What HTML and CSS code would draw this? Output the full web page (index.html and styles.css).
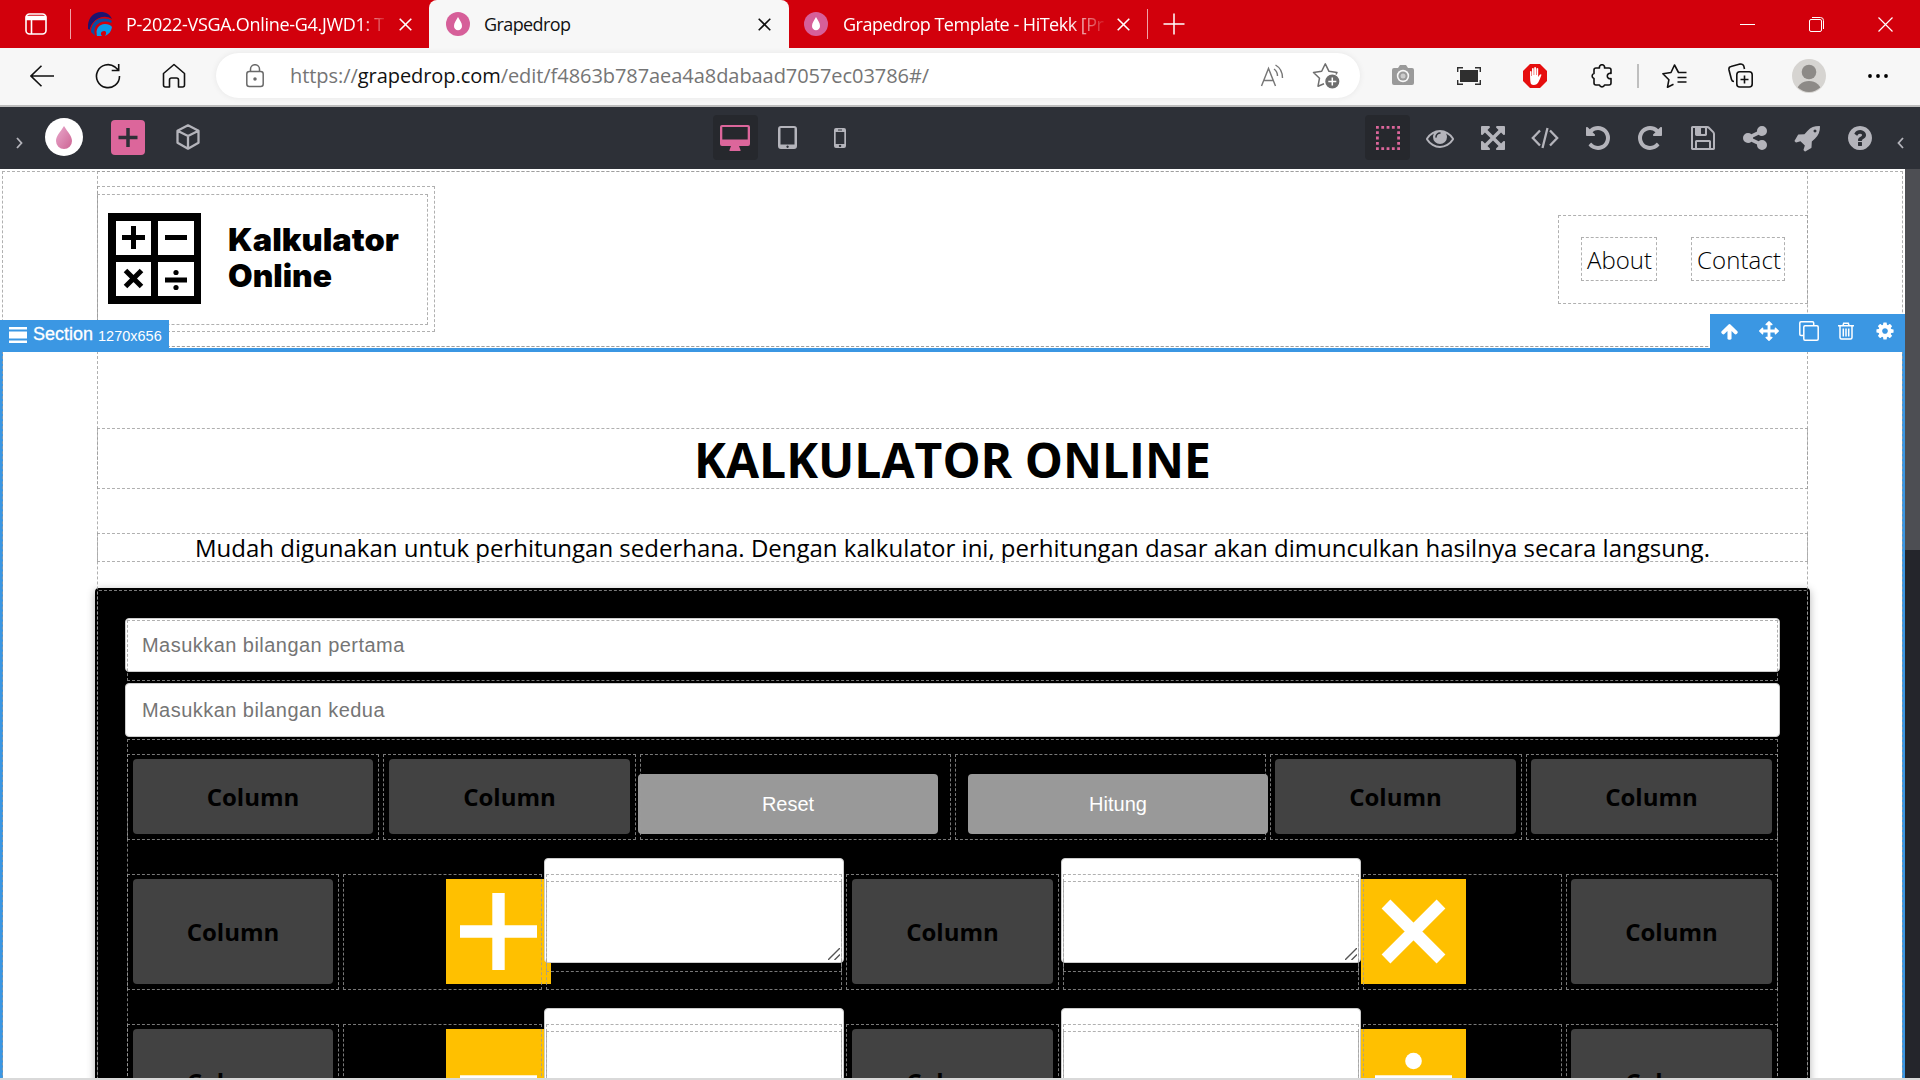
FILE: index.html
```html
<!DOCTYPE html>
<html lang="id">
<head>
<meta charset="utf-8">
<title>Grapedrop</title>
<link rel="stylesheet" href="styles.css">
</head>
<body>
<svg class="defs" width="0" height="0">
  <defs>
    <linearGradient id="drop" x1="0" y1="0" x2="1" y2="1"><stop offset="0" stop-color="#e9a9cd"/><stop offset="1" stop-color="#cd6493"/></linearGradient>
    <symbol id="grape" viewBox="0 0 24 24"><circle cx="12" cy="12" r="12" fill="#d65f99"/><path d="M12 5c2 3.700 4 5.800 4 9a4 4.300 0 0 1-8 0c0-3.200 2-5.300 4-9z" fill="#fff"/></symbol>
    <symbol id="x" viewBox="0 0 13 13"><path d="M.7.7l11.600 11.600M12.300.7L.7 12.300" fill="none" stroke="currentColor" stroke-width="1.600"/></symbol>
  </defs>
</svg>

<div class="tabs">
  <div class="workspace"><svg width="22" height="22" viewBox="0 0 22 22" fill="none" stroke="#fff" stroke-width="1.600"><rect x="1" y="1" width="20" height="20" rx="3.500"/><path d="M1.500 3.500h19v3h-19z" fill="#fff"/><path d="M6.500 6v15"/></svg></div>
  <div class="tab-rule"></div>
  <div class="tab tab-first">
    <svg class="favicon" viewBox="0 0 24 24"><path d="M0 17C-1 7 5 0 13 0c5 0 9 2.500 11 7-5-3-10-3-14 0C5 10 3 13 2 18z" fill="#1d1370"/><path d="M3 20C3 12 8 6 15 6c4 0 7 1 9 3l-1 2c-6-3-12-1-15 3-2 3-2 6-1 10z" fill="#0c4da2"/><path d="M9 24c-2-7 2-12 8-12 3 0 6 1 7 3-1 5-3 7-7 9 2-3 1-5-1-5-3 0-4 3-2 5z" fill="#0a9bea"/><path d="M2 18C4 10 9 6 15 6s7 1 9 2M8 22c-2-7 2-11 7-11s7 1 8 2" fill="none" stroke="#d2000c" stroke-width="1"/></svg>
    <span class="tab-title title-one">P-2022-VSGA.Online-G4.JWD1: T</span>
    <svg class="close"><use href="#x"/></svg>
  </div>
  <div class="tab tab-active">
    <svg class="favicon"><use href="#grape"/></svg>
    <span class="tab-title title-two">Grapedrop</span>
    <svg class="close"><use href="#x"/></svg>
  </div>
  <div class="tab tab-last">
    <svg class="favicon"><use href="#grape"/></svg>
    <span class="tab-title title-three">Grapedrop Template - HiTekk [Pr</span>
    <svg class="close"><use href="#x"/></svg>
  </div>
  <div class="tab-rule"></div>
  <svg class="new-tab" width="22" height="22" viewBox="0 0 22 22" stroke="#fff" stroke-width="1.500"><path d="M11 .5v21M.5 11h21"/></svg>
  <div class="window-controls">
    <svg width="15" height="15" stroke="#fff" fill="none"><path d="M0 7.500h15"/></svg>
    <svg width="15" height="15" stroke="#fff" fill="none"><rect x=".5" y="2.500" width="12" height="12" rx="1.500"/><path d="M3 .5h8.500a3 3 0 0 1 3 3V12"/></svg>
    <svg width="15" height="15" stroke="#fff" stroke-width="1.200" fill="none"><path d="M.5.5l14 14M14.500.5l-14 14"/></svg>
  </div>
</div>

<div class="toolbar">
  <div class="tool"><svg width="24" height="22" viewBox="0 0 24 22" fill="none" stroke="#111" stroke-width="1.600"><path d="M24 11H1M11.500.7L1 11l10.500 10.300"/></svg></div>
  <div class="tool"><svg width="26" height="26" viewBox="0 0 26 26" fill="none" stroke="#111" stroke-width="1.600"><path d="M24.500 13A11.500 11.500 0 1 1 20 4l3.500 3.200M23.700 1v6.500h-7"/></svg></div>
  <div class="tool"><svg width="24" height="26" viewBox="0 0 24 26" fill="none" stroke="#111" stroke-width="1.600" stroke-linejoin="round"><path d="M1.500 10.500L12 1.500l10.500 9V22q0 2-2 2h-4V17q0-2-2-2h-5q-2 0-2 2v7h-4q-2 0-2-2z"/></svg></div>
  <div class="address">
    <svg class="lock" width="18" height="24" viewBox="0 0 18 24" fill="none" stroke="#6a6a6a" stroke-width="1.500"><rect x=".8" y="7.500" width="16.400" height="15" rx="2.500"/><path d="M4.500 7.500V5a4.500 4.300 0 0 1 9 0v2.500"/><circle cx="9" cy="15" r="1" fill="#6a6a6a"/></svg>
    <span class="url"><span class="scheme">https://</span><span class="host">grapedrop.com</span><span class="path">/edit/f4863b787aea4a8dabaad7057ec03786#/</span></span>
    <svg class="read" width="24" height="24" viewBox="0 0 24 24" fill="none" stroke="#767676" stroke-width="1.400"><path d="M1.500 22L8.500 4.500 15.500 22M4 16.500h9M14 5q3.500 2.500 3.500 7M15.500 1q7 4 7 13"/></svg>
    <svg class="star" width="28" height="28" viewBox="0 0 28 28" fill="none" stroke="#6e6e6e" stroke-width="1.500" stroke-linejoin="round"><path d="M24 12.500l1-2-8-1.200L13.300 1.800 9.700 9.300l-8.200 1.200 6 5.700-1.500 8 6-2.500"/><circle cx="20.300" cy="19.500" r="6.300" fill="#6e6e6e"/><path d="M20.300 15.500v8M16.300 19.500h8" stroke="#fff"/></svg>
  </div>
  <div class="tool tool-after"><svg width="22" height="21" viewBox="0 0 22 21"><path d="M2 3h4l2-3h6l2 3h4q2 0 2 2v13q0 2-2 2H2q-2 0-2-2V5q0-2 2-2z" fill="#9a9a9a"/><circle cx="11" cy="11" r="6.200" fill="#f7f7f7"/><circle cx="11" cy="11" r="4.600" fill="#9a9a9a"/><circle cx="11" cy="11" r="2.500" fill="#ccc"/></svg></div>
  <div class="tool"><svg width="24" height="18" viewBox="0 0 24 18"><path d="M3 3h18v12H3z" fill="#2f2f2f"/><path d="M.7 5V.7H6M18 .7h5.300V5M23.300 13v4.300H18M6 17.300H.7V13" fill="none" stroke="#2f2f2f" stroke-width="1.400"/></svg></div>
  <div class="tool"><svg width="24" height="24" viewBox="0 0 24 24"><path d="M7 0h10l7 7v10l-7 7H7l-7-7V7z" fill="#e60e0e"/><path d="M7 7.500q.7-.8 1.500 0v4.500h.5V4.500q.7-1 1.700 0V11h.5V3.500q.9-1 1.800 0V11h.5V4.500q.9-1 1.700 0V13l1.500-2.200q1.200-1 1.800 0-1.700 5-3 7.200-1.500 3-4.800 3T7.500 18Q7 16 7 7.500z" fill="#fff"/></svg></div>
  <div class="tool"><svg width="22" height="24" viewBox="0 0 22 24" fill="none" stroke="#111" stroke-width="1.600" stroke-linejoin="round"><path d="M6 4h3.500a2.600 2.600 0 1 1 5 0H19q2 0 2 2v3.500a2.700 2.700 0 1 0 0 5V19q0 2-2 2h-4.500a2.600 2.600 0 0 1-5 0H6q-2 0-2-2v-4.500a2.600 2.600 0 0 1 0-5V6q0-2 2-2z"/></svg></div>
  <div class="tool-rule"></div>
  <div class="tool tool-fav"><svg width="25" height="24" viewBox="0 0 25 24" fill="none" stroke="#111" stroke-width="1.600" stroke-linejoin="round"><path d="M24.500 8.500h-8L12.500 1 9 8.500.9 9.700l6 6L5.500 23.200l6-3M15.500 13.500h9M15.500 18h9"/></svg></div>
  <div class="tool"><svg width="25" height="25" viewBox="0 0 25 25" fill="none" stroke="#111" stroke-width="1.600"><rect x="8.800" y="8.800" width="15.400" height="15.200" rx="3"/><path d="M16.500 12.500v8M12.500 16.500h8M6 18.500q-2 0-2.500-2L1 7q-.5-3 2-3.500L12 1.100q3-.6 3.800 2L16.500 6"/></svg></div>
  <div class="tool tool-avatar"><svg width="34" height="34" viewBox="0 0 34 34"><clipPath id="face"><circle cx="17" cy="17" r="16"/></clipPath><circle cx="17" cy="17" r="17" fill="#d6d4d1"/><circle cx="17" cy="13" r="7.300" fill="#8d8a87"/><ellipse cx="17" cy="33" rx="12.500" ry="11" fill="#8d8a87" clip-path="url(#face)"/></svg></div>
  <div class="tool tool-more"><svg width="20" height="4"><circle cx="2" cy="2" r="1.900"/><circle cx="10" cy="2" r="1.900"/><circle cx="18" cy="2" r="1.900"/></svg></div>
</div>

<div class="editor">
  <div class="editor-left">
    <svg class="chev" width="7" height="12" viewBox="0 0 7 12"><path d="M1 1l4.500 5L1 11"/></svg>
    <svg class="brand" width="38" height="38" viewBox="0 0 38 38"><circle cx="19" cy="19" r="19" fill="#fff"/><path d="M19 8c4 6.500 8 10 8 15a8 8 0 0 1-16 0c0-5 4-8.500 8-15z" fill="url(#drop)"/></svg>
    <svg class="add" width="34" height="35" viewBox="0 0 34 35"><rect width="34" height="35" rx="4" fill="#dc669b"/><path d="M17 8v19M7.500 17.500h19" stroke="#2d3037" stroke-width="3.500"/></svg>
    <svg class="cube" width="24" height="26" viewBox="0 0 24 26"><path d="M12 1.300l10.500 5.400v12L12 24.700 1.500 18.700v-12zM1.500 6.700L12 12l10.500-5.300M12 12v12.500"/></svg>
  </div>
  <div class="devices">
    <div class="tile tile-on"><svg width="30" height="26" viewBox="0 0 30 26"><path d="M2 0h26q2 0 2 2v17q0 2-2 2h-9l1.500 4v1h-11v-1l1.500-4H2q-2 0-2-2V2Q0 0 2 0zM2.300 2v12.500h25.400V2z" fill="#dc669b" fill-rule="evenodd"/></svg></div>
    <div class="tile"><svg width="19" height="23" viewBox="0 0 19 23"><path d="M3 0h13q3 0 3 3v17q0 3-3 3H3q-3 0-3-3V3q0-3 3-3zM2.500 2v16.500h14V2zM9.500 19.500a1.200 1.200 0 1 0 .1 0z" fill="#b4b4bb" fill-rule="evenodd"/></svg></div>
    <div class="tile"><svg width="12" height="20" viewBox="0 0 12 20"><path d="M2 0h8q2 0 2 2v16q0 2-2 2H2q-2 0-2-2V2q0-2 2-2zM1.700 4v12h8.600V4zM6 16.700a1.200 1.200 0 1 0 .1 0zM4 1.500v1h4v-1z" fill="#b4b4bb" fill-rule="evenodd"/></svg></div>
  </div>
  <div class="actions">
    <div class="tile tile-on"><svg width="24" height="24" viewBox="0 0 24 24" stroke="#dc669b" stroke-width="2.800" stroke-dasharray="2.800 2.500" fill="none"><path d="M0 1.400h24M0 22.600h24M1.400 5.300v14M22.600 5.300v14"/></svg></div>
    <div class="tile"><svg class="fa" viewBox="0 0 1792 1792"><path d="M1664 960q-152-236-381-353 61 104 61 225 0 185-131.500 316.500t-316.500 131.500-316.500-131.500-131.500-316.500q0-121 61-225-229 117-381 353 133 205 333.500 326.500t434.500 121.500 434.500-121.500 333.500-326.500zm-720-384q0-20-14-34t-34-14q-125 0-214.500 89.500t-89.500 214.500q0 20 14 34t34 14 34-14 14-34q0-86 61-147t147-61q20 0 34-14t14-34zm848 384q0 34-20 69-140 230-376.500 368.500t-499.500 138.500-499.500-139-376.500-368q-20-35-20-69t20-69q140-229 376.500-368t499.500-139 499.500 139 376.500 368q20 35 20 69z"/></svg></div>
    <div class="tile"><svg class="fa" viewBox="0 0 1792 1792"><path d="M1411 541l-355 355 355 355 144-144q29-31 70-14 39 17 39 59v448q0 26-19 45t-45 19h-448q-42 0-59-40-17-39 14-69l144-144-355-355-355 355 144 144q31 30 14 69-17 40-59 40h-448q-26 0-45-19t-19-45v-448q0-42 40-59 39-17 69 14l144 144 355-355-355-355-144 144q-19 19-45 19-12 0-24-5-40-17-40-59v-448q0-26 19-45t45-19h448q42 0 59 40 17 39-14 69l-144 144 355 355 355-355-144-144q-31-30-14-69 17-40 59-40h448q26 0 45 19t19 45v448q0 42-39 59-13 5-25 5-26 0-45-19z"/></svg></div>
    <div class="tile"><svg width="28" height="22" viewBox="0 0 28 22" fill="none" stroke="#b4b4bb" stroke-width="2.300"><path d="M9 3.500L1.800 11 9 18.500M19 3.500l7.200 7.500-7.200 7.500M16.500 1l-5 20"/></svg></div>
    <div class="tile"><svg class="fa" viewBox="0 0 1792 1792"><path d="M1664 896q0 156-61 298t-164 245-245 164-298 61q-172 0-327-72.500t-264-204.500q-7-10-6.500-22.500t8.500-20.500l137-138q10-9 25-9 16 2 23 12 73 95 179 147t225 52q104 0 198.500-40.500t163.500-109.500 109.500-163.500 40.500-198.500-40.500-198.500-109.500-163.500-163.500-109.500-198.500-40.500q-98 0-188 35.500t-160 101.500l137 138q31 30 14 69-17 40-59 40h-448q-26 0-45-19t-19-45v-448q0-42 40-59 39-17 69 14l130 129q107-101 244.500-156.500t284.500-55.500q156 0 298 61t245 164 164 245 61 298z"/></svg></div>
    <div class="tile"><svg class="fa" viewBox="0 0 1792 1792"><path d="M1664 256v448q0 26-19 45t-45 19h-448q-42 0-59-40-17-39 14-69l138-138q-148-137-349-137-104 0-198.500 40.500t-163.500 109.500-109.500 163.500-40.500 198.500 40.500 198.500 109.500 163.500 163.500 109.500 198.500 40.500q119 0 225-52t179-147q7-10 23-12 15 0 25 9l137 138q9 8 9.500 20.500t-7.500 22.500q-109 132-264 204.500t-327 72.500q-156 0-298-61t-245-164-164-245-61-298 61-298 164-245 245-164 298-61q147 0 284.500 55.500t244.500 156.500l130-129q29-31 70-14 39 17 39 59z"/></svg></div>
    <div class="tile"><svg class="fa" viewBox="0 0 1792 1792"><path d="M512 1536h768v-384h-768v384zm896 0h128v-896q0-14-10-38.500t-20-34.500l-281-281q-10-10-34-20t-39-10v416q0 40-28 68t-68 28h-576q-40 0-68-28t-28-68v-416h-128v1280h128v-416q0-40 28-68t68-28h832q40 0 68 28t28 68v416zm-384-928v-320q0-13-9.500-22.500t-22.500-9.500h-192q-13 0-22.500 9.500t-9.500 22.500v320q0 13 9.500 22.500t22.500 9.500h192q13 0 22.500-9.500t9.500-22.500zm640 32v928q0 40-28 68t-68 28h-1344q-40 0-68-28t-28-68v-1344q0-40 28-68t68-28h928q40 0 88 20t76 48l280 280q28 28 48 76t20 88z"/></svg></div>
    <div class="tile"><svg class="fa" viewBox="0 0 1792 1792"><path d="M1344 1024q133 0 226.500 93.500t93.500 226.500-93.500 226.500-226.500 93.500-226.500-93.500-93.500-226.500q0-12 2-34l-360-180q-92 86-218 86-133 0-226.500-93.500t-93.500-226.500 93.500-226.500 226.500-93.500q126 0 218 86l360-180q-2-22-2-34 0-133 93.500-226.500t226.500-93.500 226.500 93.500 93.500 226.500-93.500 226.500-226.500 93.500q-126 0-218-86l-360 180q2 22 2 34t-2 34l360 180q92-86 218-86z"/></svg></div>
    <div class="tile"><svg class="fa" viewBox="0 0 1792 1792"><path d="M1440 448q0-40-28-68t-68-28-68 28-28 68 28 68 68 28 68-28 28-68zm224-288q0 249-75.500 430.500t-253.500 360.500q-81 80-195 176l-20 379q-2 16-16 26l-384 224q-7 4-16 4-12 0-23-9l-64-64q-13-14-8-32l85-276-281-281-276 85q-3 1-9 1-14 0-23-9l-64-64q-17-19-5-39l224-384q10-14 26-16l379-20q96-114 176-195 188-187 358-258t431-71q14 0 24 9.500t10 22.500z"/></svg></div>
    <div class="tile"><svg class="fa" viewBox="0 0 1792 1792"><path d="M1024 1376v-192q0-14-9-23t-23-9h-192q-14 0-23 9t-9 23v192q0 14 9 23t23 9h192q14 0 23-9t9-23zm256-672q0-88-55.500-163t-138.500-116-170-41q-243 0-371 213-15 24 8 42l132 100q7 6 19 6 16 0 25-12 53-68 86-92 34-24 86-24 48 0 85.500 26t37.500 59q0 38-20 61t-68 45q-63 28-115.500 86.500t-52.500 125.500v36q0 14 9 23t23 9h192q14 0 23-9t9-23q0-19 21.500-49.500t54.500-49.500q32-18 49-28.500t46-35 44.500-48 28-60.500 12.500-81zm384 192q0 209-103 385.500t-279.500 279.500-385.500 103-385.500-103-279.500-279.500-103-385.500 103-385.500 279.500-279.500 385.500-103 385.500 103 279.500 279.500 103 385.500z"/></svg></div>
    <svg class="chev chev-right" width="7" height="12" viewBox="0 0 7 12"><path d="M6 1L1.500 6 6 11"/></svg>
  </div>
</div>

<div class="stage">
  <div class="page">
    <div class="site-header dash">
      <div class="header-inner dash">
        <div class="logo-col dash">
          <div class="logo dash">
            <svg class="mark" width="93" height="91" viewBox="0 0 93 91">
              <rect width="93" height="91"/>
              <g fill="#fff"><rect x="8" y="8" width="35" height="34"/><rect x="50" y="8" width="36" height="34"/><rect x="8" y="49" width="35" height="34"/><rect x="50" y="49" width="36" height="34"/></g>
              <g stroke="#000" stroke-width="5"><path d="M14 24.500h23M25.500 13v23M57 24.500h22M57 67h22M17.500 57.500l16 16M33.500 57.500l-16 16"/></g>
              <circle cx="68" cy="59.500" r="2.600"/><circle cx="68" cy="74.500" r="2.600"/>
            </svg>
            <svg class="wordmark" width="180" height="91"><text x="0" y="38" textLength="171" lengthAdjust="spacingAndGlyphs">Kalkulator</text><text x="0" y="74" textLength="104" lengthAdjust="spacingAndGlyphs">Online</text></svg>
          </div>
        </div>
        <div class="nav dash">
          <a class="nav-link nav-about dash">About</a>
          <a class="nav-link nav-contact dash">Contact</a>
        </div>
      </div>
    </div>

    <div class="section dash">
      <div class="section-edge"></div>
      <div class="badge">
        <svg width="18" height="18" viewBox="0 0 18 18" fill="#fff"><path d="M0 1h18v2.500H0zM0 5.500h18v7H0zM0 14.500h18V17H0z"/></svg>
        <span class="badge-name">Section</span><span class="badge-size">1270x656</span>
      </div>
      <div class="section-tools">
        <svg width="19" height="19" viewBox="0 0 1792 1792"><path d="M1675 971q0 51-37 90l-75 75q-38 38-91 38-54 0-90-38l-294-293v704q0 52-37.500 84.500t-90.500 32.500h-128q-53 0-90.500-32.500t-37.500-84.500v-704l-294 293q-36 38-90 38t-90-38l-75-75q-38-38-38-90 0-53 38-91l651-651q35-37 90-37 54 0 91 37l651 651q37 39 37 91z"/></svg>
        <svg width="20" height="20" viewBox="0 0 1792 1792"><path d="M1792 896q0 26-19 45l-256 256q-19 19-45 19t-45-19-19-45v-128h-384v384h128q26 0 45 19t19 45-19 45l-256 256q-19 19-45 19t-45-19l-256-256q-19-19-19-45t19-45 45-19h128v-384h-384v128q0 26-19 45t-45 19-45-19l-256-256q-19-19-19-45t19-45l256-256q19-19 45-19t45 19 19 45v128h384v-384h-128q-26 0-45-19t-19-45 19-45l256-256q19-19 45-19t45 19l256 256q19 19 19 45t-19 45-45 19h-128v384h384v-128q0-26 19-45t45-19 45 19l256 256q19 19 19 45z"/></svg>
        <svg width="20" height="20" viewBox="0 0 20 20"><g fill="none" stroke="#fff" stroke-width="1.500"><path d="M4.500 14.500H2q-1.200 0-1.200-1.200V2Q.8.800 2 .8h11.500q1.200 0 1.200 1.200v2.500"/><rect x="4.800" y="4.800" width="14.400" height="14.400" rx="1.200"/></g></svg>
        <svg class="trash" width="16" height="18" viewBox="0 0 16 18"><g fill="none" stroke="#fff" stroke-width="1.500"><path d="M0 3.700h16M5 3.500l.7-2.300h4.600l.7 2.300M2 4v11.500q0 1.500 1.500 1.500h9q1.500 0 1.500-1.500V4M5.300 6.500v8M8 6.500v8M10.700 6.500v8"/></g></svg>
        <svg width="20" height="20" viewBox="0 0 1792 1792"><path d="M1152 896q0-106-75-181t-181-75-181 75-75 181 75 181 181 75 181-75 75-181zm512-109v222q0 12-8 23t-20 13l-185 28q-19 54-39 91 35 50 107 138 10 12 10 25t-9 23q-27 37-99 108t-94 71q-12 0-26-9l-138-108q-44 23-91 38-16 136-29 186-7 28-36 28h-222q-14 0-24.500-8.500t-11.500-21.500l-28-184q-49-16-90-37l-141 107q-10 9-25 9-14 0-25-11-126-114-165-168-7-10-7-23 0-12 8-23 15-21 51-66.500t54-70.500q-27-50-41-99l-183-27q-13-2-21-12.500t-8-23.500v-222q0-12 8-23t19-13l186-28q14-46 39-92-40-57-107-138-10-12-10-24 0-10 9-23 26-36 98.500-107.500t94.500-71.500q13 0 26 10l138 107q44-23 91-38 16-136 29-186 7-28 36-28h222q14 0 24.500 8.500t11.500 21.500l28 184q49 16 90 37l142-107q9-9 24-9 13 0 25 10 129 119 165 170 7 8 7 22 0 12-8 23-15 21-51 66.500t-54 70.500q26 50 41 98l183 28q13 2 21 12.500t8 23.500z"/></svg>
      </div>

      <div class="section-inner dash">
        <h1 class="title dash">KALKULATOR ONLINE</h1>
        <p class="lead dash">Mudah digunakan untuk perhitungan sederhana. Dengan kalkulator ini, perhitungan dasar akan dimunculkan hasilnya secara langsung.</p>
        <div class="calc dash">
          <div class="field-wrap dash"><div class="field">Masukkan bilangan pertama</div></div>
          <div class="field-wrap field-second"><div class="field">Masukkan bilangan kedua</div></div>
          <div class="rows dash">
            <div class="row row-buttons">
              <div class="cell dash"><div class="slot">Column</div></div>
              <div class="cell dash"><div class="slot">Column</div></div>
              <div class="cell cell-btn dash"><div class="btn">Reset</div></div>
              <div class="cell cell-btn cell-btn-right dash"><div class="btn">Hitung</div></div>
              <div class="cell cell-late dash"><div class="slot">Column</div></div>
              <div class="cell cell-late dash"><div class="slot">Column</div></div>
            </div>
            <div class="row row-ops">
              <div class="cell dash"><div class="slot">Column</div></div>
              <div class="cell cell-icon dash"><svg class="op op-left" viewBox="0 0 105 105"><rect width="105" height="105"/><path d="M14 52.500h77M52.500 14v77"/></svg></div>
              <div class="cell cell-area dash"><div class="area-wrap dash"><div class="area"><svg class="grip" viewBox="0 0 12 12"><path d="M0 12L12 0M6.500 12L12 6.500"/></svg></div></div></div>
              <div class="cell cell-mid dash"><div class="slot">Column</div></div>
              <div class="cell cell-area dash"><div class="area-wrap dash"><div class="area"><svg class="grip" viewBox="0 0 12 12"><path d="M0 12L12 0M6.500 12L12 6.500"/></svg></div></div></div>
              <div class="cell cell-icon cell-icon-right dash"><svg class="op" viewBox="0 0 105 105"><rect width="105" height="105"/><path d="M25 25l55 55M80 25L25 80"/></svg></div>
              <div class="cell cell-late dash"><div class="slot">Column</div></div>
            </div>
            <div class="row row-ops">
              <div class="cell dash"><div class="slot">Column</div></div>
              <div class="cell cell-icon dash"><svg class="op op-left" viewBox="0 0 105 105"><rect width="105" height="105"/><path d="M14 52.500h77"/></svg></div>
              <div class="cell cell-area dash"><div class="area-wrap dash"><div class="area"></div></div></div>
              <div class="cell cell-mid dash"><div class="slot">Column</div></div>
              <div class="cell cell-area dash"><div class="area-wrap dash"><div class="area"></div></div></div>
              <div class="cell cell-icon cell-icon-right dash"><svg class="op" viewBox="0 0 105 105"><rect width="105" height="105"/><path d="M14 52.500h77"/><circle cx="52.500" cy="32" r="8.300"/><circle cx="52.500" cy="73" r="8.300"/></svg></div>
              <div class="cell cell-late dash"><div class="slot">Column</div></div>
            </div>
          </div>
        </div>
      </div>
    </div>
  </div>
  <div class="scrollbar"><div class="thumb"></div></div>
</div>
<div class="floor"></div>
</body>
</html>
```

FILE: styles.css
```css
* { box-sizing: border-box; }
html, body { margin: 0; height: 1080px; overflow: hidden; background: #fff; }
body { display: flex; flex-direction: column; font-family: "Open Sans", "Noto Sans", sans-serif; color: #000; }
svg { display: block; flex: none; }
.defs { position: absolute; }

/* Browser tabs */
.tabs { display: flex; align-items: center; height: 48px; flex: none; background: #d2000c; color: #fff; }
.workspace { width: 70px; padding-left: 25px; }
.tab-rule { width: 1px; height: 30px; background: #f0a3a7; }
.tab { display: flex; align-items: center; height: 48px; font-size: 18px; white-space: nowrap; }
.tab-first { width: 358px; padding: 0 17px 0 17px; }
.tab-active { width: 360px; padding: 0 18px 0 17px; background: #f7f7f7; color: #111; border-radius: 8px 8px 0 0; }
.tab-last { width: 358px; padding: 0 17px 0 15px; }
.favicon { width: 24px; height: 24px; }
.tab-title { flex: 1; margin: -1px 13px 0 14px; overflow: hidden; line-height: 26px; }
.title-one { letter-spacing: -0.3px; -webkit-mask-image: linear-gradient(90deg, #000 235px, transparent 262px); mask-image: linear-gradient(90deg, #000 235px, transparent 262px); }
.title-two { letter-spacing: -0.6px; }
.title-three { margin-left: 15px; letter-spacing: -0.5px; -webkit-mask-image: linear-gradient(90deg, #000 225px, transparent 265px); mask-image: linear-gradient(90deg, #000 225px, transparent 265px); }
.close { width: 13px; height: 13px; }
.new-tab { margin-left: 15px; }
.window-controls { display: flex; gap: 54px; margin-left: auto; padding-right: 27px; }

/* Address toolbar */
.toolbar { display: flex; align-items: center; height: 59px; flex: none; padding: 0 9px 2px; background: #f7f7f7; border-bottom: 2px solid #bdbdbd; }
.tool { width: 66px; display: flex; justify-content: center; }
.address { display: flex; align-items: center; width: 1144px; height: 45px; margin-left: 9px; padding: 0 20px 0 30px; border-radius: 23px; background: #fff; box-shadow: 0 0 6px rgba(0,0,0,.07); }
.url { margin-left: 26px; font-size: 20px; line-height: 28px; letter-spacing: -0.06px; color: #757575; white-space: nowrap; }
.host { color: #111; }
.read { margin-left: auto; }
.star { margin-left: 28px; }
.tool-after { margin-left: 10px; }
.tool-rule { width: 2px; height: 24px; margin: 0 2px 0 3px; background: #bfbfbf; }
.tool-avatar { margin-left: 3px; }
.tool-more { margin-left: 3px; }

/* Page builder bar */
.editor { display: flex; align-items: center; height: 62px; flex: none; padding-bottom: 1px; background: #2d3037; }
.editor-left { display: flex; align-items: center; width: 713px; padding-left: 16px; }
.chev { margin-top: 10px; fill: none; stroke: #b4b4bb; stroke-width: 1.800; }
.brand { margin-left: 22px; margin-top: -2px; }
.add { margin-left: 28px; }
.cube { margin-left: 31px; margin-top: -2px; fill: none; stroke: #b4b4bb; stroke-width: 2.300; stroke-linejoin: round; }
.devices { display: flex; gap: 7.5px; width: 652px; }
.devices svg { margin-right: 1px; }
.tile { display: flex; align-items: center; justify-content: center; width: 45px; height: 45px; border-radius: 4px; }
.tile-on { background: #26282d; }
.actions { display: flex; align-items: center; gap: 7.5px; }
.fa { width: 28px; height: 28px; fill: #b4b4bb; }
.chev-right { margin-left: 7px; }

/* Canvas */
.stage { display: flex; height: 909px; flex: none; overflow: hidden; }
.page { width: 1905px; height: 909px; overflow: hidden; background: #fff; }
.scrollbar { width: 15px; background: #24252b; }
.thumb { height: 381px; background: #4d4e53; }
.floor { height: 2px; background: #d9d9d9; }
.dash { outline: 1px dashed rgba(155,155,155,.78); outline-offset: -3px; }

.site-header { height: 180px; padding: 0 95px; }
.header-inner { display: flex; align-items: center; justify-content: space-between; height: 180px; }
.logo-col { width: 342px; height: 150px; padding: 8px 7px 7px 0; }
.logo { display: flex; width: 335px; height: 135px; padding: 21px 0 0 12.5px; }
.wordmark { margin-left: 27.5px; overflow: visible; font: 900 31px Inter, "Liberation Sans", sans-serif; }
.nav { display: flex; gap: 30px; width: 254px; height: 93px; padding: 22px 21px 22px 23px; }
.nav-link { height: 48px; padding: 8px 0 7px 8px; font-size: 24px; line-height: 33px; font-weight: 300; white-space: nowrap; }
.nav-about { width: 80px; }
.nav-contact { width: 98px; letter-spacing: .1px; }

.section { position: relative; height: 984px; padding: 0 95px; box-shadow: inset 3px 0 #3b97e3, inset -3px 0 #3b97e3; }
.section-edge { position: absolute; left: 0; right: 0; top: -1px; height: 4px; background: #3b97e3; }
.badge { position: absolute; left: 0; top: -29px; display: flex; align-items: center; width: 169px; height: 29px; padding-left: 9px; background: #3b97e3; color: #fff; font-family: "Liberation Sans", Arial, sans-serif; white-space: nowrap; }
.badge-name { margin-left: 6px; font-size: 18px; line-height: 22px; margin-top: -1px; -webkit-text-stroke: .3px #fff; }
.badge-size { margin-left: 5px; font-size: 14.500px; line-height: 22px; margin-top: 2px; }
.section-tools { position: absolute; right: 0; top: -35px; display: flex; align-items: center; justify-content: space-between; width: 195px; height: 34px; padding: 0 10px; background: #3b97e3; fill: #fff; }
.trash { margin: 0 1px 0 -1px; }
.section-inner { height: 984px; padding-top: 77px; }
.title { margin: 0; height: 65px; text-align: center; font-size: 48px; line-height: 67px; font-weight: 700; }
.lead { margin: 40px 0 0; height: 33px; text-align: center; font-size: 24px; line-height: 33px; white-space: nowrap; }
.calc { height: 800px; margin-top: 24px; padding: 30px; border-radius: 4px; background: #000; box-shadow: 0 2px 8px rgba(0,0,0,.3); }
.field-wrap { height: 65px; }
.field-second { height: 54px; }
.field { height: 54px; padding: 0 16px; border: 1px solid #ccc; border-radius: 4px; background: #fff; color: #757575; font: 20px/52px "Liberation Sans", Arial, sans-serif; letter-spacing: .46px; }
.rows { height: 700px; padding-top: 15px; }
.row { display: grid; margin-bottom: 30px; }
.row-buttons { height: 90px; grid-template-columns: 256px 257px 315px 315px 256px 256px; }
.row-ops { height: 120px; grid-template-columns: 216px 203px 300px 217px 300px 203px 216px; }
.cell { min-width: 0; padding: 7px 8px 8px 8px; }
.slot { display: flex; align-items: center; justify-content: center; height: 100%; border-radius: 4px; background: #424242; font-size: 24px; font-weight: 700; line-height: 33px; }
.cell-late { padding-left: 7px; }
.cell-btn { padding: 22px 0 0; }
.cell-btn-right { padding-left: 15px; }
.btn { width: 300px; height: 60px; border-radius: 4px; background: #999; color: #fff; text-align: center; font: 20px/60px "Liberation Sans", Arial, sans-serif; }
.cell-icon { padding-left: 0; padding-right: 0; }
.op { width: 105px; height: 105px; fill: #ffc000; }
.op path { stroke: #fff; stroke-width: 12.400; }
.op circle { fill: #fff; }
.op-left { margin-left: 105px; }
.cell-area { padding: 7px 0 0; }
.area-wrap { display: flex; height: 95px; }
.area { display: flex; align-items: flex-end; justify-content: flex-end; width: 300px; height: 105px; margin-top: -21px; padding: 0 3px 2px 0; border: 1px solid #ccc; border-radius: 4px; background: #fff; }
.grip { width: 12px; height: 12px; fill: none; stroke: #555; stroke-width: 1.400; }
```
